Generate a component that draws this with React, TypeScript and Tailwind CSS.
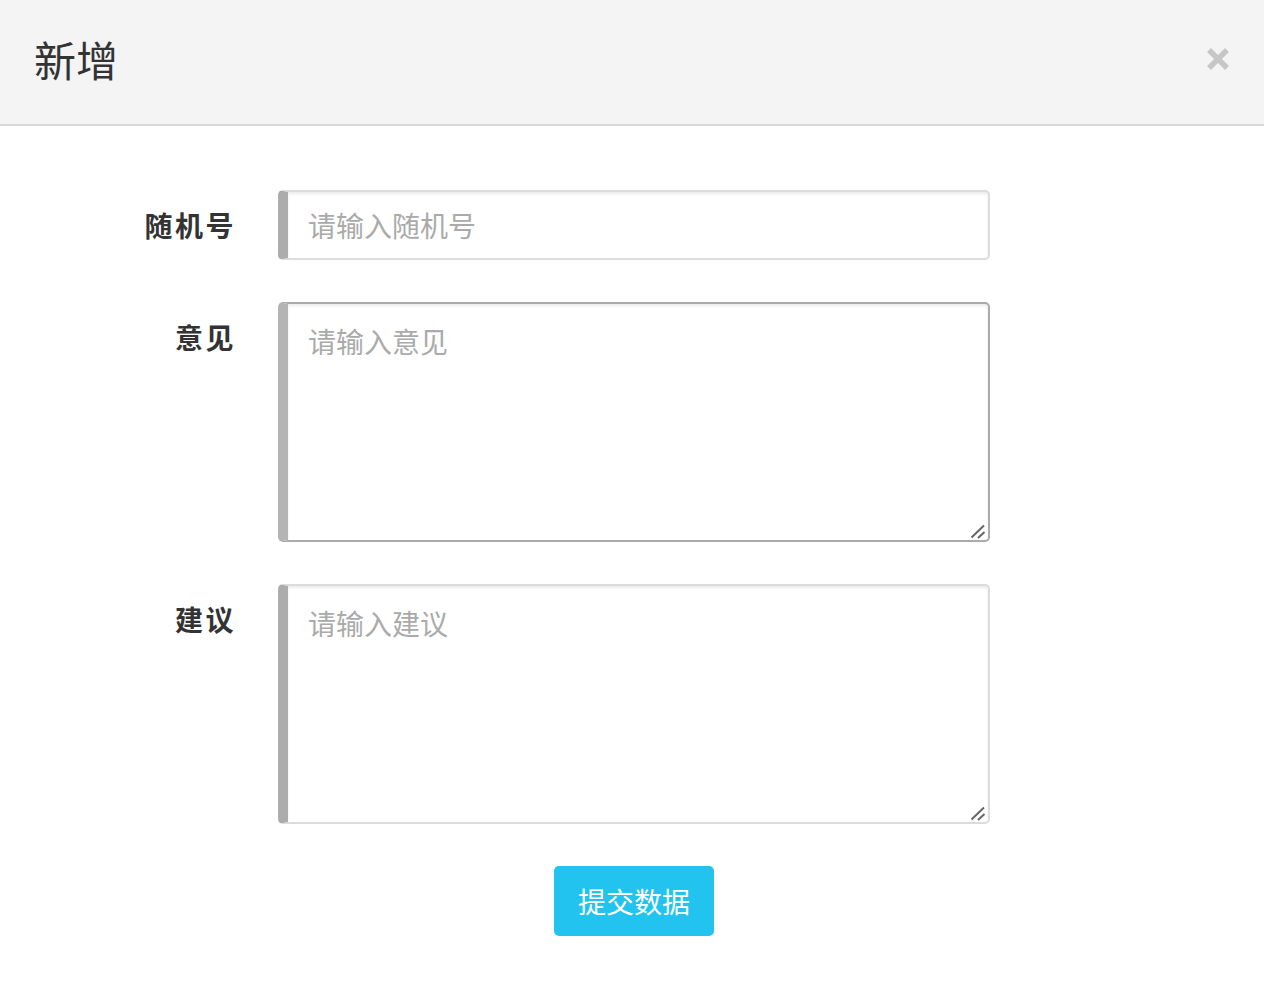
const fieldBase =
	"w-full rounded-[5px] border-2 border-l-[10px] bg-white px-[20px] text-[28px] text-[#333] placeholder:text-[#aaa] shadow-[inset_0_2px_3px_rgba(0,0,0,0.08)] outline-none";

export default function App() {
	return (
		<div
			className="min-h-[1000px] bg-white"
			style={{ fontFamily: '"Noto Sans CJK SC", "Noto Sans", sans-serif' }}>
			<header className="flex h-[126px] items-center justify-between border-b-2 border-[#d9d9d9] bg-[#f4f4f4] pl-[34px] pr-[32px]">
				<h1 className="-mt-[6px] text-[42px] leading-none text-[#333]">新增</h1>
				<button className="-mt-[6px] flex h-[28px] w-[28px] items-center justify-center" aria-label="关闭">
					<svg width="24" height="24" viewBox="0 0 24 24">
						<path d="M3 3 L21 21 M21 3 L3 21" stroke="#c6c6c6" strokeWidth="5.5" strokeLinecap="butt" />
					</svg>
				</button>
			</header>

			<form className="grid grid-cols-[236px_712px] gap-x-[42px] gap-y-[42px] pt-[64px]">
				<FieldLabel text="随机号" />
				<input
					className={`${fieldBase} h-[70px] border-[#dcdcdc] border-l-[#acacac]`}
					placeholder="请输入随机号"
				/>

				<FieldLabel text="意见" />
				<TextArea placeholder="请输入意见" tone="border-[#ababab] border-l-[#b4b4b4]" />

				<FieldLabel text="建议" />
				<TextArea placeholder="请输入建议" tone="border-[#dcdcdc] border-l-[#acacac]" />

				<div />
				<div className="flex justify-center">
					<button
						type="button"
						className="h-[70px] w-[160px] rounded-[5px] bg-[#22c3ee] text-[28px] text-white">
						提交数据
					</button>
				</div>
			</form>
		</div>
	);
}

function TextArea({ placeholder, tone }: { placeholder: string; tone: string }) {
	return (
		<div className="relative">
			<textarea
				className={`${fieldBase} block h-[240px] resize-none pt-[16px] leading-[1.5] ${tone}`}
				placeholder={placeholder}
			/>
			{/* resize grip */}
			<svg
				className="pointer-events-none absolute bottom-[3px] right-[4px]"
				width="16"
				height="16"
				viewBox="0 0 16 16">
				<path d="M1.5 14.5 L14 2.5 M8 15 L14.5 9" stroke="#666" strokeWidth="2" />
			</svg>
		</div>
	);
}

function FieldLabel({ text }: { text: string }) {
	return (
		<label className="h-[70px] text-right text-[28px] font-bold leading-[70px] tracking-[2.5px] text-[#333]">
			{text}
		</label>
	);
}
